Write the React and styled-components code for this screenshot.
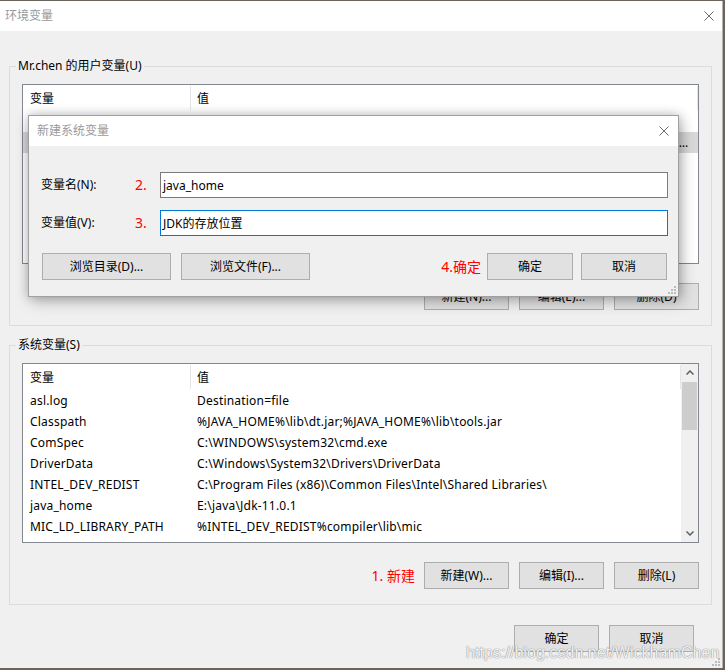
import React from 'react';
import styled, { createGlobalStyle } from 'styled-components';

const FONT = `"Noto Sans", "Noto Sans CJK SC", sans-serif`;

const Global = createGlobalStyle`
  html, body { margin: 0; padding: 0; }
  body {
    background: #6b645c;
    font-family: ${FONT};
    font-size: 12px;
    color: #000;
  }
  #root { width: 725px; height: 670px; overflow: hidden; }
  * { box-sizing: border-box; }
`;

const Page = styled.div`
  position: relative;
  width: 725px;
  height: 670px;
  padding-top: 1px;
`;

const Window = styled.div`
  position: relative;
  width: 723px;
  height: 667px;
  background: #f0f0f0;
  border-right: 1px solid #b4b4b4;
  display: flex;
  flex-direction: column;
`;

const TitleBar = styled.div`
  height: 30px;
  flex-shrink: 0;
  background: #fff;
  display: flex;
  align-items: center;
  justify-content: space-between;
  padding: 0 ${p => p.$pr}px 0 ${p => p.$pl}px;
`;

const TitleText = styled.span`
  color: #9a9a9a;
  font-size: 12px;
  line-height: 16px;
`;

const Content = styled.div`
  padding: 0 10px 0 9px;
  display: flex;
  flex-direction: column;
`;

const Group = styled.fieldset`
  margin: ${p => p.$mt}px 0 0 0;
  padding: 10px 12px 15px 12px;
  border: 1px solid #dcdcdc;
  min-width: 0;
`;

const Legend = styled.legend`
  padding: 0 2px;
  margin-left: -6px;
  line-height: 16px;
  font-size: 12px;
  color: #000;
`;

const ListBox = styled.div`
  height: 180px;
  border: 1px solid #828790;
  background: #fff;
  display: flex;
  overflow: hidden;
`;

const ListMain = styled.div`
  flex: 1;
  min-width: 0;
  display: flex;
  flex-direction: column;
`;

const HeaderRow = styled.div`
  height: 26px;
  flex-shrink: 0;
  display: grid;
  grid-template-columns: 168px 1fr;
  padding-top: 1px;
`;

const HeaderCell = styled.div`
  border-right: 1px solid #e5e5e5;
  padding-left: ${p => p.$pl}px;
  display: flex;
  align-items: center;
  height: 24px;
`;

const Row = styled.div`
  height: 21px;
  flex-shrink: 0;
  display: grid;
  grid-template-columns: 168px 1fr;
  align-items: center;
  background: ${p => (p.$selected ? '#d9d9d9' : 'transparent')};
`;

const Cell = styled.div`
  padding-left: ${p => p.$pl}px;
  padding-right: 8px;
  white-space: nowrap;
  overflow: hidden;
  text-overflow: ellipsis;
  line-height: 21px;
  letter-spacing: 0.2px;
`;

const ScrollBar = styled.div`
  width: 17px;
  flex-shrink: 0;
  background: #f0f0f0;
  display: flex;
  flex-direction: column;
`;

const ScrollArrow = styled.div`
  height: 17px;
  display: flex;
  align-items: center;
  justify-content: center;
`;

const ScrollTrack = styled.div`
  flex: 1;
  padding: 1px 1px;
`;

const Thumb = styled.div`
  height: 48px;
  background: #cdcdcd;
`;

const ButtonRow = styled.div`
  display: flex;
  justify-content: flex-end;
  align-items: center;
  gap: ${p => p.$gap}px;
  margin-top: ${p => p.$mt}px;
  padding-right: ${p => p.$pr || 0}px;
`;

const Button = styled.button`
  width: ${p => p.$w}px;
  height: 27px;
  background: #e1e1e1;
  border: 1px solid #adadad;
  font-family: ${FONT};
  font-size: 12px;
  color: #000;
  padding: 0;
  line-height: 16px;
`;

const Note = styled.span`
  color: #ff0000;
  font-size: 14px;
  line-height: 18px;
  margin-right: ${p => p.$mr || 0}px;
`;

const Watermark = styled.div`
  position: absolute;
  left: 466px;
  top: 643px;
  font-family: "Liberation Sans", Arial, sans-serif;
  font-size: 16px;
  line-height: 20px;
  letter-spacing: 0.05px;
  color: rgba(255, 255, 255, 0.9);
  text-shadow: 0 0 1px #8a8a8a, 0 0 1px #8a8a8a;
  white-space: nowrap;
`;

const Grip = styled.svg`
  position: absolute;
  right: ${p => p.$r}px;
  bottom: ${p => p.$b}px;
`;

/* dialog */
const Dialog = styled.div`
  position: absolute;
  left: 28px;
  top: 115px;
  width: 651px;
  height: 182px;
  background: #f0f0f0;
  border: 1px solid #a0a0a0;
  box-shadow: 0 0 10px rgba(0, 0, 0, 0.22), 3px 5px 14px rgba(0, 0, 0, 0.22);
  display: flex;
  flex-direction: column;
`;

const DialogBody = styled.div`
  padding: 26px 10px 16px 12px;
  display: flex;
  flex-direction: column;
`;

const FormGrid = styled.div`
  display: grid;
  grid-template-columns: 94px 25px 1fr;
  row-gap: 12px;
  align-items: center;
`;

const Label = styled.span`
  font-size: 12px;
  line-height: 16px;
`;

const Input = styled.div`
  height: 26px;
  border: 1px solid ${p => (p.$focus ? '#0078d7' : '#7a7a7a')};
  background: #fff;
  padding-left: 2px;
  display: flex;
  align-items: center;
  font-size: 12px;
`;

const DialogButtons = styled.div`
  margin-top: 17px;
  display: flex;
  justify-content: space-between;
  align-items: center;
`;

const ButtonGroup = styled.div`
  display: flex;
  align-items: center;
  gap: ${p => p.$gap}px;
  margin-left: ${p => p.$ml || 0}px;
  margin-right: ${p => p.$mr || 0}px;
`;

const CloseX = ({ size = 10 }) => (
  <svg width={size} height={size} viewBox="0 0 10 10">
    <path d="M0.5 0.5 L9.5 9.5 M9.5 0.5 L0.5 9.5" stroke="#6d6d6d" strokeWidth="1" fill="none" />
  </svg>
);

const Chevron = ({ down }) => (
  <svg width="8" height="5" viewBox="0 0 8 5">
    <polyline
      points={down ? '0.5,0.5 4,4 7.5,0.5' : '0.5,4.5 4,1 7.5,4.5'}
      stroke="#606060"
      strokeWidth="1.5"
      fill="none"
    />
  </svg>
);

const GripIcon = ({ r, b }) => (
  <Grip $r={r} $b={b} width="8" height="8" viewBox="0 0 8 8">
    {[
      [6, 0], [6, 3], [3, 3], [6, 6], [3, 6], [0, 6],
    ].map(([x, y], i) => (
      <rect key={i} x={x} y={y} width="2" height="2" fill="#bcbcbc" />
    ))}
  </Grip>
);

const userVars = [
  ['OneDrive', 'C:\\Users\\Mr.chen\\OneDrive'],
  ['Path', 'C:\\Users\\Mr.chen\\AppData\\Local\\Microsoft\\WindowsApps;C:\\Users\\Mr.chen\\AppData\\Local\\Programs\\Microsoft VS Code\\bin;C:\\Program Files'],
  ['TEMP', 'C:\\Users\\Mr.chen\\AppData\\Local\\Temp'],
  ['TMP', 'C:\\Users\\Mr.chen\\AppData\\Local\\Temp'],
];

const sysVars = [
  ['asl.log', 'Destination=file'],
  ['Classpath', '%JAVA_HOME%\\lib\\dt.jar;%JAVA_HOME%\\lib\\tools.jar'],
  ['ComSpec', 'C:\\WINDOWS\\system32\\cmd.exe'],
  ['DriverData', 'C:\\Windows\\System32\\Drivers\\DriverData'],
  ['INTEL_DEV_REDIST', 'C:\\Program Files (x86)\\Common Files\\Intel\\Shared Libraries\\'],
  ['java_home', 'E:\\java\\Jdk-11.0.1'],
  ['MIC_LD_LIBRARY_PATH', '%INTEL_DEV_REDIST%compiler\\lib\\mic'],
];

const VarList = ({ rows, selected, scroll }) => (
  <ListBox>
    <ListMain>
      <HeaderRow>
        <HeaderCell $pl={7}>变量</HeaderCell>
        <HeaderCell $pl={6}>值</HeaderCell>
      </HeaderRow>
      {rows.map(([k, v], i) => (
        <Row key={k} $selected={i === selected}>
          <Cell $pl={7}>{k}</Cell>
          <Cell $pl={6}>{v}</Cell>
        </Row>
      ))}
    </ListMain>
    {scroll && (
      <ScrollBar>
        <ScrollArrow><Chevron /></ScrollArrow>
        <ScrollTrack><Thumb /></ScrollTrack>
        <ScrollArrow><Chevron down /></ScrollArrow>
      </ScrollBar>
    )}
  </ListBox>
);

export default function App() {
  return (
    <>
      <Global />
      <Page>
        <Window>
          <TitleBar $pl={5} $pr={8}>
            <TitleText>环境变量</TitleText>
            <CloseX />
          </TitleBar>
          <Content>
            <Group $mt={27}>
              <Legend>Mr.chen 的用户变量(U)</Legend>
              <VarList rows={userVars} selected={1} />
              <ButtonRow $gap={10} $mt={19}>
                <Button $w={85}>新建(N)...</Button>
                <Button $w={85}>编辑(E)...</Button>
                <Button $w={85}>删除(D)</Button>
              </ButtonRow>
            </Group>
            <Group $mt={11}>
              <Legend>系统变量(S)</Legend>
              <VarList rows={sysVars} scroll />
              <ButtonRow $gap={10} $mt={19}>
                <Note $mr={-1}>1. 新建</Note>
                <Button $w={85}>新建(W)...</Button>
                <Button $w={85}>编辑(I)...</Button>
                <Button $w={85}>删除(L)</Button>
              </ButtonRow>
            </Group>
            <ButtonRow $gap={10} $mt={20} $pr={18}>
              <Button $w={85}>确定</Button>
              <Button $w={85}>取消</Button>
            </ButtonRow>
          </Content>
          <GripIcon r={2} b={2} />
        </Window>

        <Dialog>
          <TitleBar $pl={8} $pr={9}>
            <TitleText>新建系统变量</TitleText>
            <CloseX />
          </TitleBar>
          <DialogBody>
            <FormGrid>
              <Label>变量名(N):</Label>
              <Note>2.</Note>
              <Input>java_home</Input>
              <Label>变量值(V):</Label>
              <Note>3.</Note>
              <Input $focus>JDK的存放位置</Input>
            </FormGrid>
            <DialogButtons>
              <ButtonGroup $gap={10} $ml={1}>
                <Button $w={129}>浏览目录(D)...</Button>
                <Button $w={129}>浏览文件(F)...</Button>
              </ButtonGroup>
              <ButtonGroup $gap={8} $mr={1}>
                <Note $mr={-2}>4.确定</Note>
                <Button $w={86}>确定</Button>
                <Button $w={86}>取消</Button>
              </ButtonGroup>
            </DialogButtons>
          </DialogBody>
          <GripIcon r={2} b={2} />
        </Dialog>

        <Watermark>https://blog.csdn.net/WickhamChen</Watermark>
      </Page>
    </>
  );
}
